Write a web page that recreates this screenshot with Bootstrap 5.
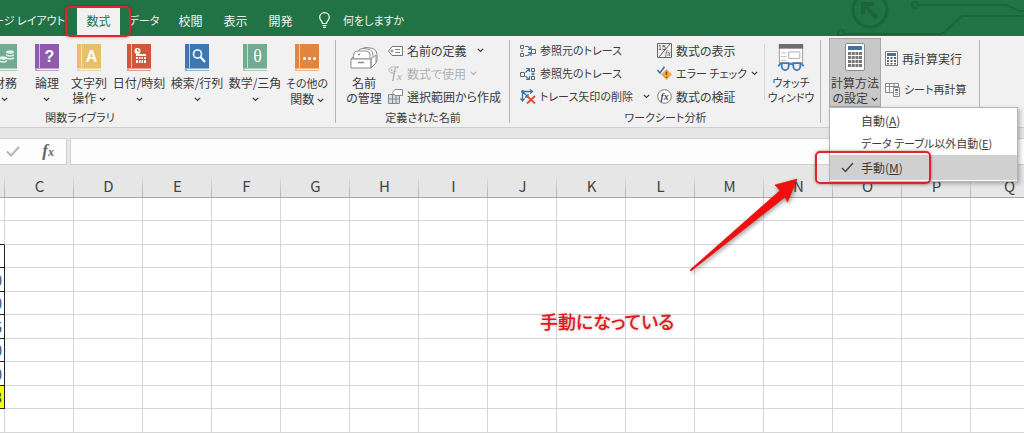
<!DOCTYPE html>
<html lang="ja">
<head>
<meta charset="utf-8">
<meta name="viewport" content="width=device-width, initial-scale=1">
<title>数式</title>
<link href="https://cdn.jsdelivr.net/npm/bootstrap@5.3.0/dist/css/bootstrap.min.css" rel="stylesheet">
<style>
:root{--xl-green:#217346;--xl-ink:#3b3b3b;--xl-red:#e0242b}
body{font-family:"Noto Sans CJK JP","Noto Sans",sans-serif;font-size:12px;line-height:15px;color:var(--xl-ink);font-feature-settings:"palt";background:#fff;overflow:hidden}
button{font-feature-settings:inherit;color:inherit;background:none;border:0;padding:0;line-height:15px;white-space:nowrap}
svg{flex:none;display:block}
.kana{font-size:11px}
/* tab strip */
.tabstrip{background:var(--xl-green);height:36px;padding-top:8px}
.tabstrip button{height:28px;color:#eef5f0;padding-bottom:4px;width:45px;flex:none}
.tabstrip .tab-cut{width:77px;padding-right:12px;overflow:hidden;display:flex;justify-content:flex-end;align-items:center}
.tabstrip .tab-on{background:#f1f1f1;color:var(--xl-green);width:43px}
.tabstrip .tab-mid{width:48px}
.tabstrip .tellme{width:auto;margin-left:16px;gap:13px}
.ring{position:absolute;border:2px solid var(--xl-red);border-radius:5px;box-shadow:0 0 3px rgba(120,0,0,.5);pointer-events:none}
.ring-tab{inset:-2px -11px -1px -12px}
.ring-item{left:-15px;top:-4px;width:116px;height:33px}
.circuit{right:0;top:0;opacity:.75}
/* ribbon */
.ribbon{background:#f1f1f1;border-bottom:1px solid #cfcfcf;height:92px}
.group{position:relative;padding-top:3px;flex:none}
.group::after{content:"";position:absolute;right:0;top:4px;bottom:4px;width:1px;background:#b4b4b4}
.group-body{height:69px}
.group-label{text-align:center;font-size:11px;line-height:19px}
.g-lib{width:336px}
.g-lib .group-inner{width:510px;margin-left:-175px;padding-right:5px}
.g-lib .group-label{padding-left:5px}
.g-names{width:174px}
.g-audit{width:311px}
.g-calc{width:159px}
.big{display:flex;flex-direction:column;align-items:center;padding-top:5px;gap:4px;flex:none;width:58px}
.big.w-s{width:42px}.big.w-m{width:46px}.big.w-l{width:52px}
.big .chev{display:inline-block;vertical-align:1px}
.cmd{display:flex;align-items:center;height:23px;gap:4px}
.cmd .chev{margin-left:6px}
.cmd:disabled{color:#b0b0b0}
.calc-on{background:#c8c8c8;border:1px solid #a8a8a8;width:52px;padding-top:4px;height:69px;margin-top:-1px}
.calc-cmds{padding-top:3px;gap:8px}
.thin{width:1px;height:56px;background:#dadada;margin-top:5px}
/* calculation menu */
.calc-menu{left:8px;top:71px;width:189px;font-size:12px;border:1px solid #b5b5b5;border-radius:0;padding:1px 0;background:#fff;box-shadow:2px 2px 4px rgba(0,0,0,.25);min-width:0;z-index:5}
.calc-menu .menu-row{position:relative;display:flex;align-items:center;width:100%;height:23px;padding-left:11px;color:var(--xl-ink)}
.calc-menu .menu-row .tick{width:20px}
.calc-menu .menu-row.on{background:#d0d0d0;height:25px}
/* formula bar */
.fbar{background:#e6e6e6;padding:10px 0;gap:3px;height:47px}
.fbar-tools{width:67px;background:#fdfdfd;border:1px solid #d0d0d0;border-left:0;padding:0 12px 0 6px}
.fbar input{border:1px solid #d0d0d0;border-right:0;background:#fdfdfd;min-width:0;outline:0}
.fx{font-family:"Liberation Serif",serif;font-style:italic;font-weight:bold;font-size:17px;color:#666}
.fx small{font-size:12px}
/* sheet */
.sheet{table-layout:fixed;border-collapse:separate;border-spacing:0;width:1112px;margin-left:-64px}
.sheet th{height:23px;width:69px;background:linear-gradient(#e6e6e6,#b0b0b0) right/1px 100% no-repeat #e6e6e6;border-bottom:1px solid #a9a9a9;text-align:center;font-weight:400;font-size:15px;line-height:20px;padding:0;color:#444}
.sheet th:last-child{width:77px}
.sheet td{height:24px;padding:0 2px 0 0;border-right:1px solid #d6d6d6;border-bottom:1px solid #d6d6d6;line-height:20px;font-size:14px;text-align:right;color:#1f4e5f}
.sheet tr:nth-child(odd) td{height:23px}
.sheet td.box{border-color:#222}
.sheet td.above-box{border-bottom-color:#222}
.sheet td.sum{background:#ff0}
.note{left:540px;top:307px;font-size:18px;line-height:28px;font-weight:500;color:#e3161b;text-shadow:0 0 3px rgba(150,90,90,.55)}
.pointer{left:684px;top:172px;filter:drop-shadow(1px 2px 2px rgba(0,0,0,.4));pointer-events:none}
</style>
</head>
<body>
<svg width="0" height="0" class="position-absolute" aria-hidden="true">
  <symbol id="book" viewBox="0 0 24 27"><path fill="currentColor" d="M0 0H24V24H0z"/><path fill="#fff" opacity=".6" d="M4 0h1v24H4z"/><path fill="currentColor" opacity=".55" d="M0 24h24v1H2v1h22v1H0z"/></symbol>
  <symbol id="chev" viewBox="0 0 7 5"><path d="M.8.8 3.500 3.500 6.200.8" fill="none" stroke="currentColor" stroke-width="1.200"/></symbol>
</svg>

<nav class="tabstrip d-flex position-relative" aria-label="リボン">
  <svg class="circuit position-absolute" width="204" height="36" viewBox="0 0 204 36" fill="none" stroke="#1b5f39" stroke-width="3" aria-hidden="true">
    <circle cx="50" cy="10" r="17"/><path d="M57 18 43 4M43 14V4h11" stroke-width="4"/>
    <circle cx="95" cy="5" r="3" stroke-width="2"/><path d="M98 5h88l14 6h4M24 34h98l20-18h62" stroke-width="2"/><circle cx="21" cy="33" r="3" stroke-width="2"/>
  </svg>
  <button class="tab-cut kana">ページ レイアウト</button>
  <button class="tab-on position-relative">数式<span class="ring ring-tab"></span></button>
  <button class="tab-mid kana">データ</button>
  <button>校閲</button>
  <button>表示</button>
  <button>開発</button>
  <button class="tellme kana d-flex align-items-center">
    <svg width="11" height="16" viewBox="0 0 11 16" fill="none" stroke="#fff" stroke-width="1.200"><path d="M3.500 11.500C3.500 9 .7 8.500.7 5.300a4.800 4.600 0 0 1 9.600 0c0 3.200-2.800 3.700-2.800 6.200zM3.500 13.500h4M4 15.300h3"/></svg>
    何をしますか</button>
</nav>

<main>
<section class="ribbon d-flex">
  <div class="group g-lib"><div class="overflow-hidden"><div class="group-inner">
    <div class="group-body d-flex justify-content-end">
      <button class="big w-s"><svg width="24" height="27" color="#70ab92"><use href="#book"/><g fill="#e8f3ee"><ellipse cx="17" cy="8" rx="4" ry="1.800"/><path d="M13 10q4 2.500 8 0v1.500q-4 2.500-8 0zM13 13q4 2.500 8 0v1.500q-4 2.500-8 0z"/><ellipse cx="10" cy="14" rx="4" ry="1.800"/><path d="M6 16q4 2.500 8 0v1.500q-4 2.500-8 0z"/></g></svg><span>財務<br><svg class="chev" width="7" height="5"><use href="#chev"/></svg></span></button>
      <button class="big w-s"><svg width="24" height="27" color="#8e5bad"><use href="#book"/><text x="14.500" y="18" text-anchor="middle" font-family="Liberation Sans" font-weight="bold" font-size="16" fill="#fff">?</text></svg><span>論理<br><svg class="chev" width="7" height="5"><use href="#chev"/></svg></span></button>
      <button class="big w-s"><svg width="24" height="27" color="#e9bf6c"><use href="#book"/><text x="14.500" y="18" text-anchor="middle" font-family="Liberation Sans" font-weight="bold" font-size="16" fill="#fff">A</text></svg><span>文字列<br>操作 <svg class="chev" width="7" height="5"><use href="#chev"/></svg></span></button>
      <button class="big"><svg width="24" height="27" color="#d0573c"><use href="#book"/><path fill="#fff" d="M9 10h10v9H9z"/><path stroke="#d0573c" d="M9 12.500h10M9 15.500h10M11.500 12v7M14 12v7M16.500 12v7"/><circle cx="10.500" cy="7" r="3" fill="#fff"/><path d="M10.500 5v2h2" fill="none" stroke="#d0573c"/></svg><span>日付/時刻<br><svg class="chev" width="7" height="5"><use href="#chev"/></svg></span></button>
      <button class="big"><svg width="24" height="27" color="#3e78b3"><use href="#book"/><circle cx="12.500" cy="10" r="4" fill="none" stroke="#fff" stroke-width="1.600"/><path d="m15.500 13 4.500 5" stroke="#fff" stroke-width="2.200"/></svg><span>検索/行列<br><svg class="chev" width="7" height="5"><use href="#chev"/></svg></span></button>
      <button class="big"><svg width="24" height="27" color="#70ab92"><use href="#book"/><text x="14.500" y="18" text-anchor="middle" font-family="Liberation Serif" font-size="18" fill="#fff">θ</text></svg><span>数学/三角<br><svg class="chev" width="7" height="5"><use href="#chev"/></svg></span></button>
      <button class="big w-m"><svg width="24" height="27" color="#e08640"><use href="#book"/><g fill="#fff"><circle cx="9.500" cy="14.500" r="1.500"/><circle cx="14.500" cy="14.500" r="1.500"/><circle cx="19.500" cy="14.500" r="1.500"/></g></svg><span><span class="kana">その他の</span><br>関数 <svg class="chev" width="7" height="5"><use href="#chev"/></svg></span></button>
    </div>
    <div class="group-label">関数ライブラリ</div>
  </div></div></div>

  <div class="group g-names">
    <div class="group-body d-flex">
      <button class="big w-l ps-1"><svg width="28" height="27" viewBox="0 0 28 27" fill="#fff" stroke="#8c8c8c"><path d="M12 5q2-2 5-1.500l6 1q4 1.500 4 6v7l-4 2z"/><path d="M9 6q2-2 5-1.500l6 1q3 1.500 3 6v5H7z"/><path d="M4 9q1-2 4-2h8q4 0 4 4v4H3z"/><path d="M1 15h20v9H1zM21 15l5-4v8l-5 5z"/><path d="M1 15l3-3"/><path d="M8 18.500h6M8 10.500h2" stroke-width="1.500"/></svg><span>名前<br>の管理</span></button>
      <div>
        <button class="cmd"><svg width="15" height="14" viewBox="0 0 15 14" fill="#fff" stroke="#777"><path d="M4 2.500h10.500v9H4L.5 7z"/><circle cx="4" cy="7" r="1"/><path d="M7 5.500h5M7 8.500h5" stroke="#5f88aa"/></svg><span>名前の定義</span><svg class="chev" width="7" height="5"><use href="#chev"/></svg></button>
        <button class="cmd" disabled><svg width="15" height="15" viewBox="0 0 15 15" fill="none" stroke="#b5b5b5"><path d="M6 7H3L.5 4 3 1h8"/><circle cx="3.500" cy="4" r=".7"/><text x="4" y="12" font-family="Liberation Serif" font-style="italic" font-size="15" fill="#aaa" stroke="none">f</text><text x="9" y="14" font-family="Liberation Serif" font-style="italic" font-size="11" fill="#aaa" stroke="none">x</text></svg><span>数式で使用</span><svg class="chev ms-0" width="7" height="5"><use href="#chev"/></svg></button>
        <button class="cmd"><svg width="15" height="15" viewBox="0 0 15 15" fill="#fff" stroke="#888"><path fill="#d3e0ec" d="M.5 5.500h11v9H.5z"/><path d="M4.500 5v9M8 5v9M.5 10h11"/><path d="M7 .5h7.500v6H7L4.500 3.500z"/></svg><span>選択範囲から作成</span></button>
      </div>
    </div>
    <div class="group-label">定義された名前</div>
  </div>

  <div class="group g-audit">
    <div class="group-body d-flex">
      <div class="kana" style="width:137px;margin-left:10px">
        <button class="cmd"><svg width="16" height="14" viewBox="0 0 16 14" fill="none"><path stroke="#666" d="M.5 1.500h3v3h-3zM.5 9.500h3v3h-3zM11.500 5.500h4v4h-4z"/><path stroke="#3a75ad" stroke-width="1.200" d="M5 2.500h3l3 3M11 2v3.500H8M5 11.500h3l3-3M8 8.500h3V12M2 6v2"/></svg><span>参照元のトレース</span></button>
        <button class="cmd"><svg width="16" height="14" viewBox="0 0 16 14" fill="none"><path stroke="#666" d="M.5 5.500h4v4h-4zM11.500 1.500h3v3h-3zM11.500 9.500h3v3h-3z"/><path stroke="#3a75ad" stroke-width="1.200" d="M5.500 5.500 9 2M6 1.500h3.500V5M5.500 9 9 12.500M6 12.500h3.500V9M11 7h4M13 5.500v3"/></svg><span>参照先のトレース</span></button>
        <button class="cmd"><svg width="16" height="15" viewBox="0 0 16 15" fill="none"><path stroke="#3a75ad" stroke-width="1.300" d="M2 2.500h10M10 .5l2.500 2L10 4.500M2.500 3v9M.5 9.500l2 2.500 2-2.500M3 3l5 5M8 5v3H5"/><circle cx="2.500" cy="2.500" r="1.500" fill="#3a75ad"/><path stroke="#db4f3c" stroke-width="1.900" d="m7 7 8 7.500M15 7l-8 7.500"/></svg><span>トレース矢印の削除</span><svg class="chev" width="7" height="5"><use href="#chev"/></svg></button>
      </div>
      <div style="width:107px">
        <button class="cmd"><svg width="15" height="15" viewBox="0 0 15 15" fill="none" stroke="#666"><path d="M.5.5h14v14H.5zM13 1 2 14"/><text x="1" y="7" font-family="Liberation Sans" font-size="7" fill="#444" stroke="none">15</text><text x="8" y="13" font-family="Liberation Serif" font-style="italic" font-size="8" fill="#444" stroke="none">fx</text></svg><span>数式の表示</span></button>
        <button class="cmd kana"><svg width="15" height="15" viewBox="0 0 15 15"><path fill="#f0a94c" d="m9.500 3 5.500 5.500L9.500 14 4 8.500z"/><path d="M9.500 5.500v3.500M9.500 10.500V12" stroke="#7c4a11" stroke-width="1.400"/><path d="m.5 4 2.500 3L7.500.8" fill="none" stroke="#3a75ad" stroke-width="1.600"/></svg><span>エラー チェック</span><svg class="chev ms-0" width="7" height="5"><use href="#chev"/></svg></button>
        <button class="cmd"><svg width="15" height="15" viewBox="0 0 15 15"><circle cx="7.500" cy="7.500" r="6.800" fill="#fff" stroke="#777"/><text x="3.500" y="11" font-family="Liberation Serif" font-style="italic" font-weight="bold" font-size="10" fill="#444">fx</text></svg><span>数式の検証</span></button>
      </div>
      <div class="thin"></div>
      <button class="big w-l kana"><svg width="30" height="27" viewBox="0 0 30 29"><path fill="#fff" stroke="#999" d="M2.500.5h25v20h-25z"/><path fill="#6d6d6d" d="M2 0h26v5H2z"/><path fill="#fff" stroke="#aaa" d="M12.500 8.500h12v7h-12z"/><path stroke="#bbb" d="M4 9.500h6M4 13.500h6M4 17.500h6"/><path fill="#f1f1f1" stroke="#3a7ab5" stroke-width="1.900" d="M5 20.500h7.500v3.500a3.700 4 0 0 1-7.500 0zM17.500 20.500H25v3.500a3.700 4 0 0 1-7.500 0z"/><path fill="none" stroke="#3a7ab5" stroke-width="1.900" d="M12.500 22q2.500-1.500 5 0M5 21H3.500L1.500 24M25 21h1.500l2 3"/></svg><span>ウォッチ<br>ウィンドウ</span></button>
    </div>
    <div class="group-label">ワークシート分析</div>
  </div>

  <div class="group g-calc">
    <div class="group-body d-flex" style="padding-left:8px">
      <button class="big calc-on" aria-expanded="true"><svg width="20" height="28" viewBox="0 0 20 28"><rect x=".5" y=".5" width="19" height="27" rx="1.500" fill="#fff" stroke="#8a8a8a"/><path fill="#44749c" d="M3 3h14v4H3z"/><path fill="#777" d="M3 9h3v3H3zm3.700 0h3v3h-3zm3.700 0h3v3h-3zm3.600 0h3v3h-3zM3 13h3v3H3zm3.700 0h3v3h-3zm3.700 0h3v3h-3zm3.600 0h3v3h-3zM3 17h3v3H3zm3.700 0h3v3h-3zm3.700 0h3v3h-3zm3.600 0h3v3h-3zM3 21h3v3H3zm3.700 0h3v3h-3zm3.700 0h3v3h-3zm3.600 0h3v3h-3z"/></svg><span>計算方法<br>の設定 <svg class="chev" width="7" height="5"><use href="#chev"/></svg></span></button>
      <div class="calc-cmds d-flex flex-column ps-1 pt-2">
        <button class="cmd"><svg width="13" height="15" viewBox="0 0 13 15"><path d="M.5.500h12v14H.5z" fill="#fff" stroke="#808080"/><path fill="#44749c" d="M2 2h9v3H2z"/><path fill="#666" d="M2 6h2v2H2zm3.500 0h2v2h-2zM9 6h2v2H9zM2 9h2v2H2zm3.500 0h2v2h-2zM9 9h2v2H9zM2 12h2v1.500H2zm3.500 0h2v1.500h-2zM9 12h2v1.500H9z"/></svg><span>再計算実行</span></button>
        <button class="cmd kana"><svg width="15" height="15" viewBox="0 0 15 15" fill="#fff" stroke="#888"><path d="M.5 1.500h13v9H.5zM.5 4.500h13M4.500 1.500v9M9 1.500v9"/><path d="M8.500 5.500h6v9h-6z"/><path fill="#44749c" stroke="none" d="M10 7h3v2h-3z"/><path d="M10 10.500h3M10 12.500h3"/></svg><span>シート再計算</span></button>
      </div>
    </div>
    <div class="dropdown-menu show position-absolute calc-menu">
      <button class="menu-row"><span class="tick"></span><span>自動(<u>A</u>)</span></button>
      <button class="menu-row kana"><span class="tick"></span><span>データ テーブル以外自動(<u>E</u>)</span></button>
      <button class="menu-row on"><span class="tick"><svg width="13" height="11" viewBox="0 0 13 11"><path d="m1 6 3.500 3.500L12 1" fill="none" stroke="#444" stroke-width="1.400"/></svg></span><span>手動(<u>M</u>)</span><span class="ring ring-item"></span></button>
    </div>
  </div>
</section>

<section class="fbar d-flex">
  <div class="fbar-tools d-flex align-items-center justify-content-between">
    <button aria-label="入力"><svg width="14" height="11" viewBox="0 0 14 11"><path d="m1 5.500 4 4L13 1" fill="none" stroke="#b5b5b5" stroke-width="2"/></svg></button>
    <button class="fx">f<small>x</small></button>
  </div>
  <input type="text" class="flex-grow-1" aria-label="数式バー">
</section>

<div class="overflow-hidden">
<table class="sheet">
  <thead><tr><th></th><th>C</th><th>D</th><th>E</th><th>F</th><th>G</th><th>H</th><th>I</th><th>J</th><th>K</th><th>L</th><th>M</th><th>N</th><th>O</th><th>P</th><th>Q</th></tr></thead>
  <tbody id="rows"></tbody>
</table>
</div>
</main>

<div class="note position-absolute">手動になっている</div>
<svg class="pointer position-absolute" width="120" height="106" viewBox="0 0 120 106" aria-hidden="true"><path fill="#f30d0d" stroke="#d40f0f" stroke-width=".6" d="M113 7 91 13l5 5.500L6 98l1 1 94-74 2.500 5z"/></svg>

<script src="https://cdn.jsdelivr.net/npm/bootstrap@5.3.0/dist/js/bootstrap.bundle.min.js"></script>
<script>
// First column of the sheet: each entry is [value, cell class]
const firstColumn = [['', ''], ['', 'above-box'], ['', 'box'], ['0', 'box'], ['0', 'box'], ['5', 'box'], ['0', 'box'], ['0', 'box'], ['3', 'box sum'], ['', '']];
document.getElementById('rows').innerHTML = firstColumn
  .map(([value, cls]) => `<tr><td class="${cls}">${value}</td>${'<td></td>'.repeat(15)}</tr>`).join('');
</script>
</body>
</html>
